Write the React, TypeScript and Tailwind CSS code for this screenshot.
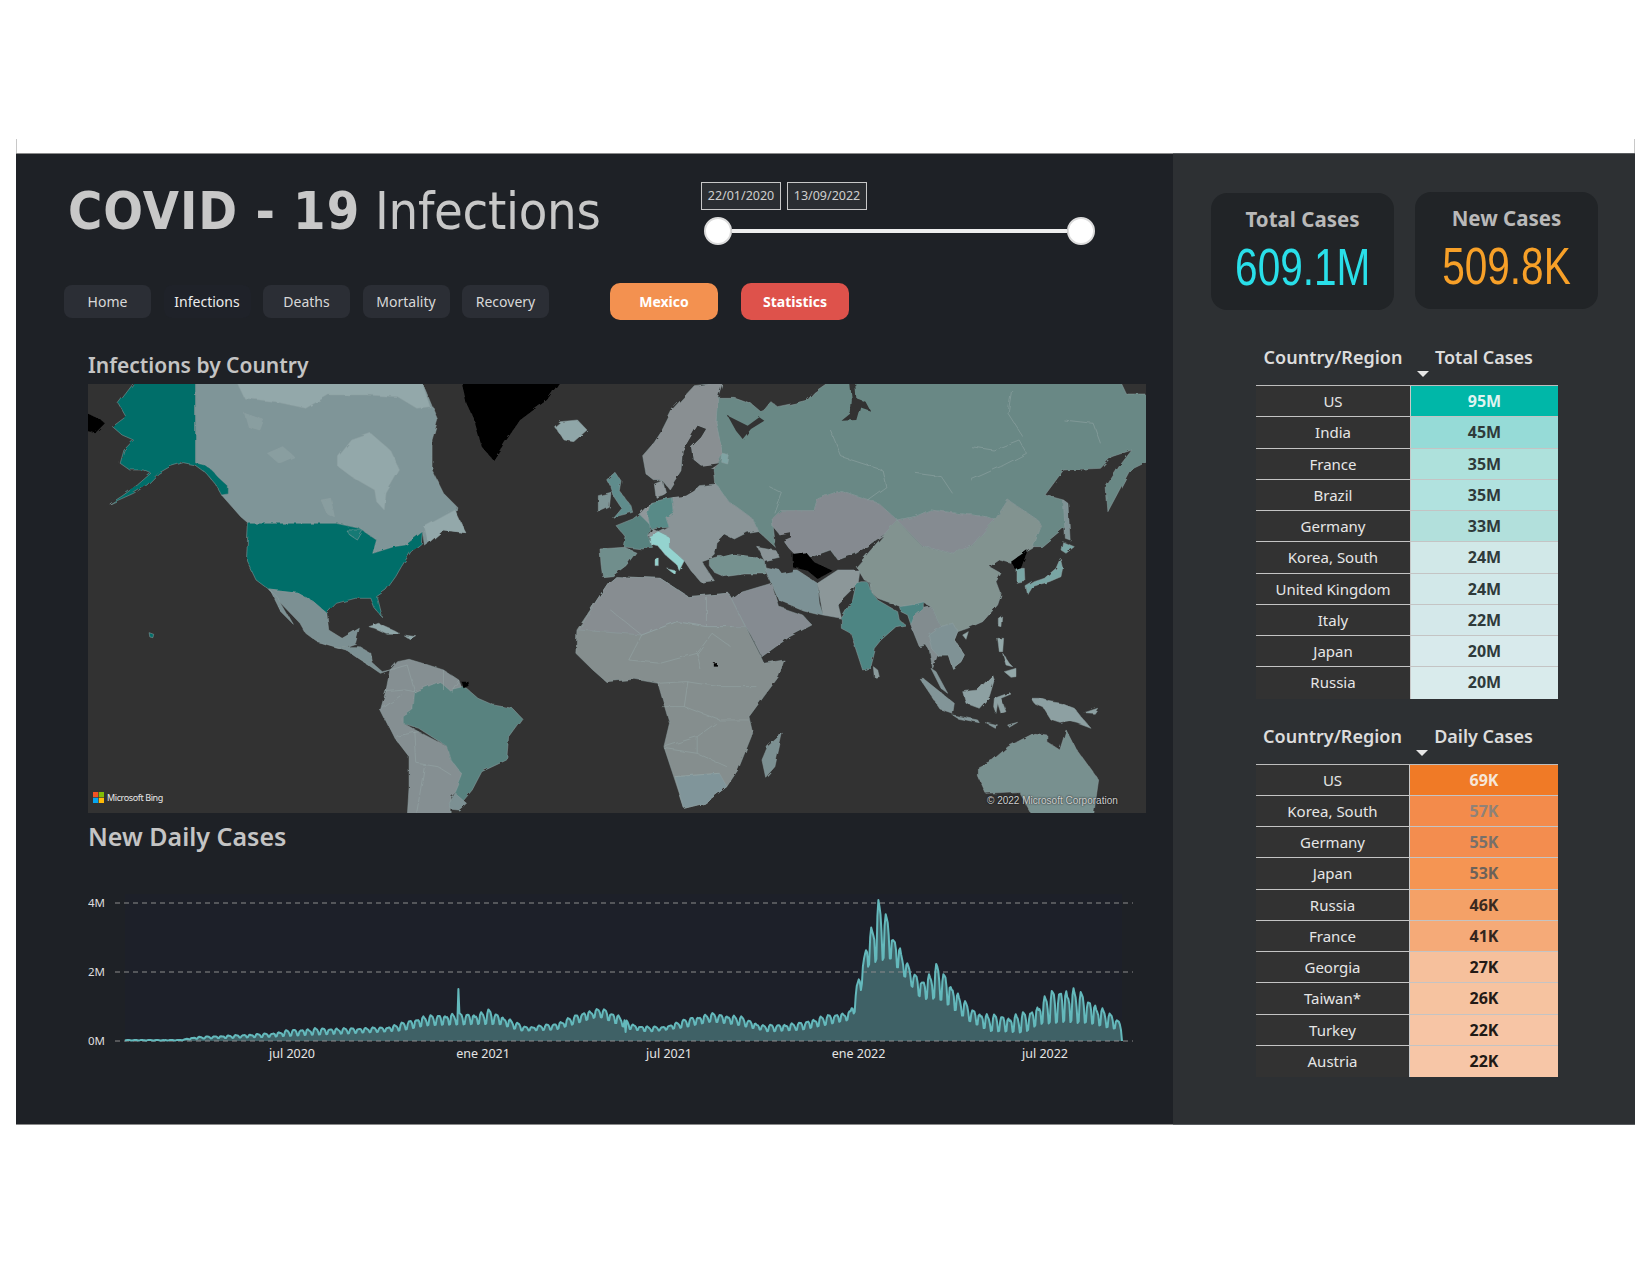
import React from 'react'

// map outlines are traced from crops, so each group has its own scale
const Z3 = 'scale(0.3827,0.3333) translate(-71,-42)'
const Z4 = 'translate(513,-14) scale(0.37,0.3333)'
const Z8 = 'translate(513,0) scale(0.3333)'
const Z9 = 'translate(773,156) scale(0.3333)'

const LAND_Z3: [string, string][] = [
  ['#7f9598', '352,25 940,25 985,150 970,210 970,300 1000,370 1035,410 1030,440 1058,488 1000,480 950,525 945,485 900,525 870,530 815,550 825,510 780,475 720,460 490,460 470,440 420,375 438,372 438,350 410,320 395,300 375,285 352,278'],
  ['#93a8aa', '455,25 940,25 965,110 930,115 880,80 800,75 700,75 640,115 560,95 480,85'],
  ['#93a8aa', '725,260 760,210 810,190 860,240 885,300 850,370 845,420 825,395 820,360 760,320 725,290'],
  ['#93a8aa', '950,470 1030,420 1058,488 1000,480 960,520'],
  ['#899ea0', '540,250 580,230 610,260 570,280'],
  ['#899ea0', '480,130 530,150 520,180 490,170'],
  ['#899ea0', '680,390 705,385 715,440 695,430'],
  ['#046e69', '200,25 352,25 352,278 375,285 395,300 410,320 438,350 438,372 420,375 405,345 380,310 350,285 320,278 285,290 255,310 225,345 190,370 128,402 160,378 200,345 235,310 215,300 180,300 155,280 165,240 190,210 160,195 135,170 170,140 150,100 170,70'],
  ['#046e69', '490,460 720,460 780,475 825,510 815,550 870,530 900,525 945,485 942,520 915,545 890,590 875,620 850,660 825,680 838,740 820,715 810,685 770,685 720,700 695,730 660,695 620,670 545,660 510,630 485,570'],
  ['#147a75', '745,480 790,480 775,510 755,495'],
  ['#046e69', '228,785 240,790 238,800 230,798'],
  ['#7c9093', '545,660 620,670 660,695 695,730 700,780 735,805 780,775 770,820 745,830 715,830 670,815 640,790 625,760 575,700'],
  ['#7c9093', '548,662 565,680 605,760 575,725'],
  ['#7c9093', '715,830 745,830 780,830 810,850 815,880 840,905 860,900 835,910 810,890 770,860 745,840'],
  ['#8fa6a8', '805,770 830,760 870,780 885,790 850,790 820,775'],
  ['#8fa6a8', '895,795 930,800 915,810'],
  ['#858f92', '860,900 880,875 910,868 960,885 1000,900 1040,930 1050,960 1020,965 990,935 925,965 920,1020 895,1040 895,1060 935,1085 1010,1130 1020,1170 1050,1210 1045,1250 1020,1280 1020,1345 905,1345 910,1250 910,1160 870,1100 835,1020 850,960'],
  ['#58827f', '925,965 990,935 1015,960 1050,950 1065,960 1090,985 1130,1005 1180,1015 1205,1045 1170,1100 1165,1170 1100,1205 1075,1260 1050,1295 1030,1270 1050,1215 1020,1170 1010,1130 935,1075 895,1060 895,1040 920,1020'],
  ['#7c9093', '1015,1300 1030,1270 1060,1300 1040,1320 1020,1318'],
  ['#000000', '1047,935 1065,935 1068,950 1055,958'],
  ['#000000', '1045,25 1310,25 1270,90 1200,150 1170,200 1130,270 1100,230 1080,150 1060,100'],
  ['#000000', '60,125 105,150 115,160 90,190 60,180'],
  ['#8fa6a8', '1290,170 1305,155 1350,150 1375,180 1340,215 1315,210'],
]

const LAND_Z4: [string, string][] = [
  ['#698885', '315,82 360,82 405,100 432,125 441,120 459,95 477,110 522,100 558,90 576,67 630,25 1400,25 1420,72 1495,72 1495,265 1430,300 1370,425 1365,350 1400,290 1435,240 1380,260 1350,295 1250,300 1200,375 1250,390 1255,470 1190,530 1165,530 1190,470 1180,450 1100,390 1065,450 1040,440 960,430 890,420 850,440 800,450 750,400 648,362 585,387 576,422 486,422 463,447 472,532 423,482 410,447 342,392 310,342 306,302 328,252 310,157'],
  ['#323232', '672,25 686,25 690,85 715,95 728,122 700,112 690,150 650,152 675,130 678,90'],
  ['#858a90', '465,470 463,447 486,422 576,422 585,387 648,362 750,400 800,450 770,490 690,550 640,570 620,540 570,560 520,560 480,490'],
  ['#7b9195', '440,590 480,600 530,600 585,640 590,700 600,735 545,720 480,690 460,640'],
  ['#858b91', '370,670 460,640 480,710 545,735 570,765 510,800 435,860 405,795 345,690'],
  ['#8c9799', '585,640 640,600 700,600 695,640 640,700 650,745 600,735'],
  ['#858b91', '800,450 850,440 890,420 960,430 1040,440 1065,450 1040,480 1000,530 950,550 870,530'],
  ['#7f9295', '1250,390 1262,400 1268,510 1255,505'],
  ['#858e8e', '19,640 40,620 160,625 235,680 345,670 430,855 440,880 495,870 480,920 420,1010 400,1040 410,1090 370,1200 340,1250 280,1300 225,1315 170,1130 185,1060 154,940 92,928 14,935 -22,900 -68,850 -65,780 -11,690'],
  ['#80959a', '225,1315 200,1220 320,1210 340,1250 280,1300'],
  ['#878d91', '-60,780 -11,690 19,640 40,620 160,625 235,680 345,670 390,770 285,770 205,755 110,795'],
  ['#7b9092', '490,1090 470,1190 445,1222 435,1170 450,1130'],
  ['#78908f', '1020,1190 1059,1170 1100,1130 1170,1090 1205,1095 1205,1115 1240,1140 1257,1080 1280,1130 1345,1230 1330,1345 1170,1345 1130,1265 1040,1270 1020,1220'],
  ['#000000', '305,880 316,880 316,890 305,890'],
]

const LAND_Z8: [string, string][] = [
  ['#898f92', '125,215 160,175 180,145 215,75 280,5 365,-5 350,40 345,115 365,210 340,255 300,245 275,225 270,190 300,160 315,135 290,125 245,200 240,260 205,315 185,290 160,290 135,270'],
  ['#5f8c8c', '20,290 45,268 60,290 55,320 90,365 95,385 35,400 60,370 40,340 30,310'],
  ['#7e9596', '-8,335 30,325 25,370 -8,385'],
  ['#58827f', '45,425 95,405 115,390 150,420 140,455 155,490 125,495 80,490 70,490 75,460'],
  ['#8f979a', '115,390 150,355 140,385 145,420 130,405'],
  ['#8f979a', '160,300 185,290 195,330 165,340'],
  ['#588a87', '150,355 215,340 220,385 195,400 205,430 150,435 145,420 140,385'],
  ['#6f8e8c', '-3,495 70,490 105,505 75,545 35,575 5,578 0,540'],
  ['#8a9497', '215,340 280,320 295,305 345,300 380,350 455,405 470,440 440,445 400,465 370,450 345,475 340,510 330,520 300,530 340,590 300,595 270,560 250,530 205,490 205,460 175,445 205,430 195,400 220,385'],
  ['#8f979a', '140,455 155,435 175,445 150,460'],
  ['#94d3cf', '145,460 175,445 205,460 205,490 250,530 235,560 225,540 190,510 170,485 148,480'],
  ['#94d3cf', '162,520 172,520 172,545 162,545'],
  ['#94d3cf', '200,555 225,560 222,572'],
  ['#74918f', '325,525 350,518 400,512 460,520 490,530 495,570 430,570 370,578 340,565 325,545'],
  ['#8a9497', '470,490 525,500 535,520 490,530'],
  ['#323232', '340,505 350,475 370,452 395,475 440,448 415,470 440,490 465,500 460,520 400,512 370,520'],
  ['#323232', '520,480 530,455 570,448 570,460 545,470 560,490 585,515 575,565 545,570 530,550 540,525'],
  ['#323232', '245,200 280,140 290,125 315,135 300,160 270,190 275,225 300,245 355,238 335,252 290,270 280,320 255,335 210,340 180,340 205,320 240,290 245,240'],
  ['#323232', '380,95 410,110 440,125 475,100 490,110 450,135 425,165 405,140'],
  ['#000000', '575,510 615,505 640,535 695,560 650,585 620,560 575,550'],
  ['#7fa3a3', '365,210 385,215 380,240 362,235'],
]

const LAND_Z9: [string, string][] = [
  ['#829390', '-14,80 108,-60 185,20 274,40 330,20 374,-30 402,-60 441,-120 530,-60 540,-40 515,25 470,50 450,70 415,60 385,80 420,100 405,125 420,165 410,195 365,245 320,265 290,275 275,250 240,260 210,200 190,190 120,200 50,175 30,155 25,125 10,120'],
  ['#4e8583', '-14,130 0,125 20,125 30,155 50,180 110,215 115,240 135,255 105,260 60,300 40,325 25,385 5,390 -31,280 -59,265 -59,235 -25,180'],
  ['#4e8583', '115,200 150,195 190,185 190,205 160,230 150,255 140,225 120,215'],
  ['#828c8f', '150,255 160,230 190,205 210,200 240,260 275,250 290,275 280,300 310,345 300,365 275,385 262,345 230,345 215,385 205,330 195,315 175,320 155,270'],
  ['#7f9295', '205,285 240,260 275,250 290,275 280,300 310,345 300,365 275,385 262,345 230,345 215,330'],
  ['#8b9b9c', '37,380 50,390 55,410 40,412'],
  ['#829598', '210,385 225,395 260,460 240,445'],
  ['#829598', '178,418 190,418 280,490 275,522 240,510'],
  ['#829598', '275,525 350,540 355,548 290,535'],
  ['#829598', '370,545 410,555 400,562'],
  ['#829598', '440,555 470,547 445,562'],
  ['#8da0a2', '305,455 350,450 395,405 400,420 385,470 355,505 315,490'],
  ['#8da0a2', '400,475 445,458 450,462 420,475 435,515 420,520 410,490 405,520 398,500'],
  ['#93a8a9', '410,295 428,295 425,335 415,335'],
  ['#93a8a9', '430,395 465,385 465,410 450,412'],
  ['#93a8a9', '425,340 445,370 455,380 435,375'],
  ['#93a8a9', '412,235 422,228 420,260 412,258'],
  ['#93a8a9', '305,285 322,275 315,298'],
  ['#8da0a2', '510,475 535,475 570,485 600,490 640,505 660,530 690,565 650,550 630,545 600,550 570,540 545,500 520,490'],
  ['#8da0a2', '670,518 710,505 700,520'],
  ['#79a5a4', '598,55 605,85 600,110 565,125 530,135 515,140 500,165 495,140 520,125 550,115 585,85'],
  ['#79a5a4', '605,5 640,20 615,40 600,30'],
  ['#79a5a4', '468,85 490,85 492,125 468,130'],
  ['#000000', '450,65 500,30 480,85 465,90'],
]

const BORDERS_Z4 = [
  '205,755 110,795 25,720',
  '285,680 285,770 205,755',
  '285,770 355,770',
  '110,795 75,870 160,880 260,850 270,900',
  '260,850 300,790 350,830',
  '154,940 230,935 320,950 420,950',
  '235,935 225,1010 160,1010',
  '225,1010 320,1050 400,1050',
  '175,1130 260,1100 310,1060',
  '260,1100 260,1150 340,1190',
  '170,1135 260,1150',
  '200,1220 320,1210',
  '620,180 650,260 760,300 770,350 720,390',
  '850,310 920,320 950,370',
  '1000,230 1060,240 1130,210 1150,250 1080,290 1000,330',
  '1110,60 1100,130 1140,200',
  '1250,150 1330,160 1350,220',
  '455,350 490,370 470,430',
]

const BORDERS_Z3 = [
  '860,900 905,885 925,965',
  '850,965 900,960 925,965',
  '835,1020 890,975',
  '870,1100 935,1085',
  '925,1085 930,1180 985,1190 1020,1215',
  '950,1190 930,1328',
  '1000,900 1000,960',
  '1040,930 1020,965',
  '1415,700 1435,740 1440,870',
  '1435,740 1520,795 1568,780',
  '1350,850 1440,870 1490,900 1568,880',
]

const Group = ({ tf, land, lines }: { tf: string; land: [string, string][]; lines?: string[] }) => (
  <g transform={tf}>
    {land.map(([fill, pts], i) => (
      <polygon key={i} points={pts} fill={fill} stroke={fill === '#323232' || fill === '#000000' ? 'none' : '#8fa1a2'} strokeWidth="0.5" vectorEffect="non-scaling-stroke" />
    ))}
    {lines?.map((pts, i) => (
      <polyline key={i} points={pts} fill="none" stroke="#96a8a9" strokeWidth="0.5" vectorEffect="non-scaling-stroke" />
    ))}
  </g>
)

const WorldMap = () => (
  <div className="relative h-[429px] w-[1058px] overflow-hidden bg-[#323232]">
    <svg viewBox="0 0 1058 429" className="block h-[429px] w-[1058px]">
      <defs>
        {/* rough coastlines */}
        <filter id="rough" x="0" y="0" width="100%" height="100%">
          <feTurbulence type="fractalNoise" baseFrequency="0.09" numOctaves="3" seed="4" />
          <feDisplacementMap in="SourceGraphic" scale="4" />
          <feGaussianBlur stdDeviation="0.3" />
        </filter>
      </defs>
      <g filter="url(#rough)">
        <rect width="1058" height="429" fill="#323232" />
        <Group tf={Z3} land={LAND_Z3} lines={BORDERS_Z3} />
        <Group tf={Z4} land={LAND_Z4} lines={BORDERS_Z4} />
        <Group tf={Z8} land={LAND_Z8} />
        <Group tf={Z9} land={LAND_Z9} />
      </g>
    </svg>
    <div className="absolute bottom-[10px] left-[5px] flex items-center gap-[3px]">
      <svg viewBox="0 0 11 11" className="h-[11px] w-[11px]">
        <rect width="5.2" height="5.2" fill="#f35325" />
        <rect x="5.8" width="5.2" height="5.2" fill="#81bc06" />
        <rect y="5.8" width="5.2" height="5.2" fill="#05a6f0" />
        <rect x="5.8" y="5.8" width="5.2" height="5.2" fill="#ffba08" />
      </svg>
      <span className="text-[9px] leading-[11px] tracking-[-0.4px] text-[#e8e8e8]">Microsoft Bing</span>
    </div>
    <span className="absolute bottom-[6px] left-[899px] font-['Liberation_Sans',sans-serif] text-[10px] leading-[12px] text-[#cfcfcf] [text-shadow:0_0_2px_#000]">
      © 2022 Microsoft Corporation
    </span>
  </div>
)

// [zoom x, height above the baseline]
const UPPER: number[][] = [[92, 1], [170, 1], [190, 4], [250, 6], [300, 8], [320, 11], [360, 13], [400, 13], [460, 14], [490, 20], [510, 25], [540, 27], [560, 28], [590, 28], [605, 32], [640, 20], [660, 14], [700, 18], [740, 30], [765, 33], [790, 26], [810, 16], [850, 14], [890, 24], [920, 28], [960, 25], [990, 16], [1040, 18], [1080, 26], [1115, 30], [1125, 60], [1135, 90], [1145, 120], [1155, 142], [1165, 130], [1175, 110], [1185, 95], [1195, 78], [1205, 68], [1220, 64], [1237, 78], [1255, 63], [1265, 50], [1285, 33], [1310, 27], [1340, 26], [1370, 31], [1395, 50], [1420, 56], [1440, 50], [1470, 33], [1490, 24], [1498, 18]]
const LOWER: number[][] = [[92, 0.5], [170, 0.5], [190, 2], [300, 4], [400, 7], [480, 10], [520, 15], [590, 16], [620, 16], [650, 10], [700, 11], [760, 24], [800, 12], [830, 9], [880, 13], [920, 19], [960, 15], [1000, 9], [1050, 11], [1110, 20], [1125, 30], [1135, 70], [1150, 75], [1170, 80], [1195, 60], [1215, 40], [1240, 40], [1260, 30], [1285, 18], [1310, 9], [1360, 7], [1380, 15], [1420, 16], [1450, 16], [1490, 11], [1498, 10]]
const WEEK = [0.12, 0.8, 1, 0.92, 0.86, 0.62, 0.08]

const lerp = (env: number[][], x: number) => {
  for (let i = 1; i < env.length; i++) {
    if (x <= env[i][0]) {
      const [x0, y0] = env[i - 1]
      const [x1, y1] = env[i]
      return y0 + ((y1 - y0) * (x - x0)) / (x1 - x0)
    }
  }
  return env[env.length - 1][1]
}

const buildSeries = () => {
  const days = 966
  const out: string[] = []
  for (let d = 0; d < days; d++) {
    const zx = 92 + (d * 1406) / days
    const up = lerp(UPPER, zx)
    const lo = lerp(LOWER, zx)
    let h = lo + (up - lo) * WEEK[d % 7] * (0.72 + 0.28 * Math.abs(Math.sin(d * 12.9)))
    if (d === 323) h = 52
    if (d === 485) h = 9
    out.push(`${(125 + (d * 997) / days).toFixed(1)},${(1040 - h).toFixed(1)}`)
  }
  out.push('1122,1040')
  return out.join(' ')
}
const SERIES = buildSeries()

const DailyChart = () => (
  <svg viewBox="88 880 1058 190" className="block h-[190px] w-[1058px]">
    <rect x="125" y="893" width="997" height="147" fill="#1d2029" />
    <polygon points={`125,1040 ${SERIES}`} fill="#3f6166" />
    {[902, 971, 1040].map((y) => (
      <line key={y} x1="115" x2="1133" y1={y} y2={y} stroke="#8c8c8c" strokeWidth="1" strokeDasharray="5 4" />
    ))}
    <polyline points={SERIES} fill="none" stroke="#64b9bc" strokeWidth="2" strokeLinejoin="round" />
    {[['4M', 906], ['2M', 975], ['0M', 1044]].map(([t, y]) => (
      <text key={t} x="88" y={y} className="fill-[#dedede] text-[11.5px]">{t}</text>
    ))}
    {[['jul 2020', 292], ['ene 2021', 483], ['jul 2021', 669], ['ene 2022', 858.5], ['jul 2022', 1045]].map(([t, x]) => (
      <text key={t} x={x} y="1057" textAnchor="middle" className="fill-[#e4e4e4] text-[12.5px]">{t}</text>
    ))}
  </svg>
)

const NAV = ['Home', 'Infections', 'Deaths', 'Mortality', 'Recovery']

const TOTAL = [
  ['US', '95M', 'bg-[#00b7a8] text-[#dff3f0]'],
  ['India', '45M', 'bg-[#96dbd7] text-[#2f3a3a]'],
  ['France', '35M', 'bg-[#aee1dc] text-[#2f3a3a]'],
  ['Brazil', '35M', 'bg-[#b1e2df] text-[#2f3a3a]'],
  ['Germany', '33M', 'bg-[#b2e0dc] text-[#2f3a3a]'],
  ['Korea, South', '24M', 'bg-[#d1e8e8] text-[#2f3a3a]'],
  ['United Kingdom', '24M', 'bg-[#d2e8e9] text-[#2f3a3a]'],
  ['Italy', '22M', 'bg-[#d4e8ea] text-[#2f3a3a]'],
  ['Japan', '20M', 'bg-[#d8eaec] text-[#2f3a3a]'],
  ['Russia', '20M', 'bg-[#d9ebec] text-[#2f3a3a]'],
]

const DAILY = [
  ['US', '69K', 'bg-[#f07a26] text-[#f6e6d8]'],
  ['Korea, South', '57K', 'bg-[#f38b4b] text-[#8f8278]'],
  ['Germany', '55K', 'bg-[#f38d4f] text-[#77706a]'],
  ['Japan', '53K', 'bg-[#f59553] text-[#6b625a]'],
  ['Russia', '46K', 'bg-[#f4a167] text-[#3a2a20]'],
  ['France', '41K', 'bg-[#f5aa78] text-[#33261e]'],
  ['Georgia', '27K', 'bg-[#f6c09c] text-[#231a16]'],
  ['Taiwan*', '26K', 'bg-[#f6c3a0] text-[#231a16]'],
  ['Turkey', '22K', 'bg-[#f7c5a5] text-[#1f1a16]'],
  ['Austria', '22K', 'bg-[#f7c6a7] text-[#1f1a16]'],
]

const RankTable = ({ value, rows, split }: { value: string; rows: string[][]; split: string }) => (
  <div className="w-[302px]">
    <div className="flex h-[43px] items-start text-[18px] font-semibold leading-[30px] text-[#dcdcdc]">
      <div className={`${split} text-center`}>Country/Region</div>
      <div className="relative flex-1 text-center">
        {value}
        <svg viewBox="0 0 12 6" className="absolute left-[7px] top-[29px] h-[6px] w-[12px]">
          <polygon points="0,0 12,0 6,6" fill="#e6e6e6" />
        </svg>
      </div>
    </div>
    <div className="border-t border-[#bdbdbd]">
      {rows.map(([name, val, cls]) => (
        <div key={name} className="flex h-[31.25px] border-b border-[#c4c4c4] text-[15px] leading-[31px] last:border-b-0">
          <div className={`${split} bg-[#323232] text-center text-[#e6e6e6]`}>{name}</div>
          <div className={`flex-1 border-l border-[#c8c8c8] text-center text-[16px] font-bold ${cls}`}>{val}</div>
        </div>
      ))}
    </div>
  </div>
)

const KpiCard = ({ label, value, color, shift }: { label: string; value: string; color: string; shift: string }) => (
  <div className={`flex h-[117px] w-[183px] flex-col items-center rounded-[16px] bg-[#212427] pt-[11px] ${shift}`}>
    <div className="text-[20.5px] font-bold leading-[30px] text-[#b9b9b9]">{label}</div>
    <div className={`mt-[4px] scale-x-[0.78] font-['Liberation_Sans',sans-serif] text-[52px] leading-[58px] ${color}`}>{value}</div>
  </div>
)

export default function App() {
  return (
    <div className="min-h-[1275px] w-[1650px] bg-white font-['Noto_Sans',sans-serif]">
      <div className="flex h-[153px] items-end justify-between pl-[16px] pr-[15px]">
        <div className="h-[14px] w-px bg-[#c8c8c8]" />
        <div className="h-[14px] w-px bg-[#c8c8c8]" />
      </div>
      <div className="ml-[16px] flex h-[972px] w-[1619px]">
        <div className="w-[1157px] border-b border-t border-[#8a8a8a] bg-[#1e2126]">
          <div className="flex h-[129px]">
            <div className="w-[685px] pl-[52px] pt-[27px] font-['DejaVu_Sans_Condensed','DejaVu_Sans',sans-serif] text-[52px] leading-[60px] text-[#c8c8c8]">
              <span className="font-bold tracking-[1px]">COVID - 19</span> <span className="tracking-[-0.3px]">Infections</span>
            </div>
            <div className="pt-[28px]">
              <div className="flex gap-[6px]">
                <div className="flex h-[28px] w-[80px] items-center justify-center border-[1.5px] border-[#c8c8c8] bg-[#2b2e32] text-[12.5px] text-[#cfcfcf]">22/01/2020</div>
                <div className="flex h-[28px] w-[80px] items-center justify-center border-[1.5px] border-[#c8c8c8] bg-[#2b2e32] text-[12.5px] text-[#cfcfcf]">13/09/2022</div>
              </div>
              <div className="ml-[3px] mt-[7px] flex w-[391px] items-center">
                <div className="h-[28px] w-[28px] rounded-full border-2 border-[#dcdcdc] bg-white" />
                <div className="h-[4px] flex-1 bg-[#eeeeee]" />
                <div className="h-[28px] w-[28px] rounded-full border-2 border-[#dcdcdc] bg-white" />
              </div>
            </div>
          </div>
          <div className="flex h-[37px] items-center pl-[48px]">
            <div className="flex gap-[12.5px]">
              {NAV.map((n) => (
                <div key={n} className={`flex h-[33px] w-[87px] items-center justify-center rounded-[8px] text-[14px] text-[#d8d8d8] ${n === 'Infections' ? 'bg-[#1f2229] text-[#ececec]' : 'bg-[#2b2e35]'}`}>
                  {n}
                </div>
              ))}
            </div>
            <div className="ml-[61px] flex h-[37px] w-[108px] items-center justify-center rounded-[10px] bg-[#f39150] text-[14px] font-bold text-white">Mexico</div>
            <div className="ml-[23px] flex h-[37px] w-[108px] items-center justify-center rounded-[10px] bg-[#de524b] text-[14px] font-bold text-white">Statistics</div>
          </div>
          <div className="pl-[72px]">
            <div className="flex h-[64px] items-end pb-[4px] text-[21px] font-semibold leading-[30px] text-[#c4c4c4]">Infections by Country</div>
            <WorldMap />
            <div className="flex h-[68px] items-start pt-[5px] text-[25px] font-semibold leading-[36px] text-[#c4c4c4]">New Daily Cases</div>
            <DailyChart />
          </div>
        </div>
        <div className="flex-1 border-b border-t border-[#5a5d60] bg-[#2d3033] pt-[38px]">
          <div className="flex gap-[21px] pl-[38px]">
            <KpiCard label="Total Cases" value="609.1M" color="text-[#29dfe9]" shift="mt-px" />
            <KpiCard label="New Cases" value="509.8K" color="text-[#f7a028]" shift="" />
          </div>
          <div className="pl-[83px] pt-[32px]">
            <RankTable value="Total Cases" rows={TOTAL} split="w-[154px]" />
            <div className="h-[22px]" />
            <RankTable value="Daily Cases" rows={DAILY} split="w-[153px]" />
          </div>
        </div>
      </div>
    </div>
  )
}
